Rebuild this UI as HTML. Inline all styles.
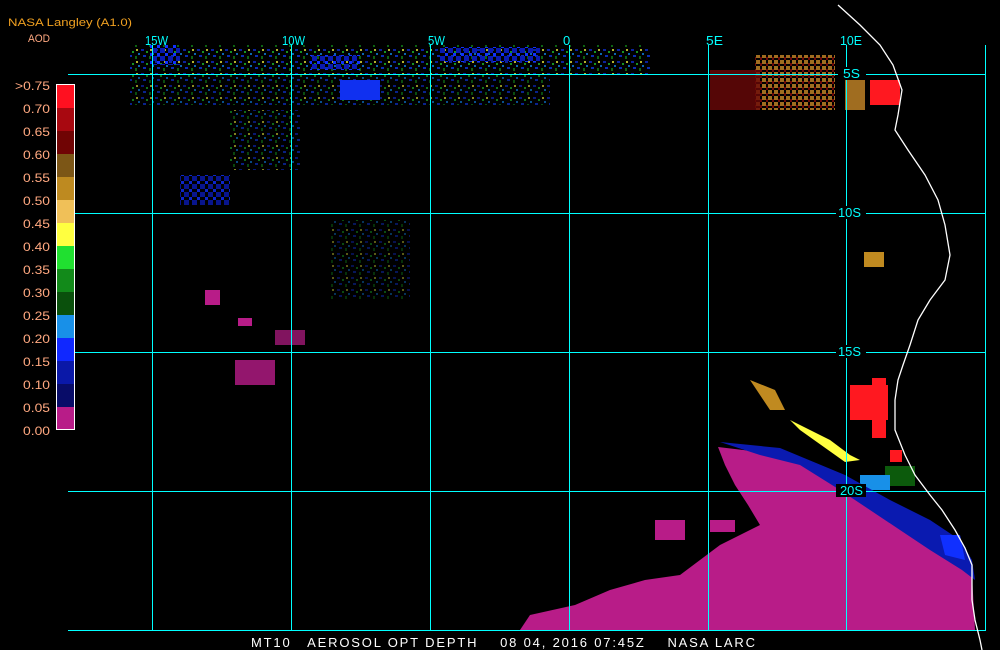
<!DOCTYPE html>
<html><head><style>
html,body{margin:0;padding:0;background:#000;width:1000px;height:650px;overflow:hidden}
svg{display:block}
</style></head><body>
<svg width="1000" height="650" viewBox="0 0 1000 650" xmlns="http://www.w3.org/2000/svg" font-family="Liberation Sans, sans-serif">
<defs>
<pattern id="spk" width="14" height="12" patternUnits="userSpaceOnUse">
<rect x="1" y="1" width="3" height="2" fill="#1030e0"/><rect x="6" y="3" width="2" height="2" fill="#20d030"/>
<rect x="10" y="1" width="2" height="2" fill="#ffff40"/><rect x="3" y="7" width="3" height="2" fill="#1040ff"/>
<rect x="9" y="8" width="2" height="3" fill="#128a1a"/><rect x="12" y="5" width="2" height="2" fill="#1090ff"/>
</pattern>
<pattern id="blu" width="8" height="8" patternUnits="userSpaceOnUse">
<rect width="5" height="5" fill="#0a1ab0"/><rect x="5" y="5" width="3" height="3" fill="#1030ff"/>
</pattern>
<pattern id="brn" width="6" height="6" patternUnits="userSpaceOnUse">
<rect width="4" height="4" fill="#a06d20"/><rect x="4" y="3" width="2" height="3" fill="#6a0808"/>
</pattern>
</defs>
<text x="8" y="26" fill="#f0a020" font-size="11" textLength="124" lengthAdjust="spacingAndGlyphs">NASA Langley (A1.0)</text>
<text x="28" y="42" fill="#ffa880" font-size="11" textLength="22" lengthAdjust="spacingAndGlyphs">AOD</text>

<!-- data -->
<rect x="130" y="45" width="520" height="30" fill="url(#spk)" opacity=".7"/>
<rect x="130" y="75" width="420" height="30" fill="url(#spk)" opacity=".55"/>
<rect x="150" y="45" width="30" height="20" fill="url(#blu)"/>
<rect x="340" y="80" width="40" height="20" fill="#1030f0"/>
<rect x="310" y="55" width="50" height="15" fill="url(#blu)"/>
<rect x="440" y="47" width="100" height="15" fill="url(#blu)"/>
<rect x="230" y="110" width="70" height="60" fill="url(#spk)" opacity=".5"/>
<rect x="180" y="175" width="50" height="30" fill="url(#blu)" opacity=".8"/>
<rect x="330" y="220" width="80" height="80" fill="url(#spk)" opacity=".35"/>
<rect x="205" y="290" width="15" height="15" fill="#b81c88"/>
<rect x="238" y="318" width="14" height="8" fill="#b81c88"/>
<rect x="235" y="360" width="40" height="25" fill="#b81c88" opacity=".8"/>
<rect x="275" y="330" width="30" height="15" fill="#b81c88" opacity=".7"/>
<rect x="755" y="55" width="80" height="55" fill="url(#brn)"/>
<rect x="710" y="70" width="50" height="40" fill="#6a0808" opacity=".8"/>
<rect x="870" y="80" width="30" height="25" fill="#ff1820"/>
<rect x="845" y="80" width="20" height="30" fill="#a06d20"/>
<rect x="864" y="252" width="20" height="15" fill="#c08a20"/>
<rect x="850" y="385" width="38" height="35" fill="#ff1820"/>
<rect x="872" y="378" width="14" height="60" fill="#ff1820"/>
<rect x="890" y="450" width="12" height="12" fill="#ff1820"/>
<rect x="885" y="466" width="30" height="20" fill="#0c5a0c"/>
<rect x="860" y="475" width="30" height="15" fill="#1890e8"/>
<polygon points="750,380 775,390 785,410 770,410" fill="#c08a20"/>
<polygon points="790,420 830,440 850,455 860,460 845,462 800,430" fill="#ffff40"/>
<polygon points="718,447 760,452 800,462 840,478 880,498 910,515 940,535 965,555 972,575 975,630 520,630 530,615 575,605 610,590 645,580 680,575 700,560 720,545 740,535 760,525 748,505 735,485 725,465" fill="#b81c88"/>
<polygon points="720,442 780,448 845,475 890,500 930,520 960,540 972,560 975,580 962,570 930,550 900,530 870,510 840,490 800,465 760,455" fill="#0a1ab0"/>
<polygon points="940,535 960,535 965,560 945,555" fill="#1030ff"/>
<rect x="655" y="520" width="30" height="20" fill="#b81c88"/>
<rect x="710" y="520" width="25" height="12" fill="#b81c88"/>

<!-- grid -->
<g stroke="#00ffff" stroke-width="1" fill="none">
<line x1="68" y1="74.5" x2="985" y2="74.5"/><line x1="68" y1="213.5" x2="985" y2="213.5"/>
<line x1="68" y1="352.5" x2="985" y2="352.5"/><line x1="68" y1="491.5" x2="985" y2="491.5"/>
<line x1="68" y1="630.5" x2="985" y2="630.5"/>
<line x1="152.5" y1="45" x2="152.5" y2="630"/><line x1="291.5" y1="45" x2="291.5" y2="630"/>
<line x1="430.5" y1="45" x2="430.5" y2="630"/><line x1="569.5" y1="45" x2="569.5" y2="630"/>
<line x1="708.5" y1="45" x2="708.5" y2="630"/><line x1="846.5" y1="45" x2="846.5" y2="630"/>
<line x1="985.5" y1="45" x2="985.5" y2="631"/>
</g>
<polyline fill="none" stroke="#fff" stroke-width="1.3" points="838,5 860,25 880,45 893,65 902,90 898,115 895,130 908,150 925,175 938,200 945,225 950,255 945,280 930,300 918,320 910,345 903,365 898,380 895,400 895,430 905,455 915,475 930,495 942,510 955,530 965,548 972,565 972,600 975,620 980,640 982,650"/>
<g fill="#00ffff" font-size="13">
<text x="145" y="45" textLength="23" lengthAdjust="spacingAndGlyphs">15W</text>
<text x="282" y="45" textLength="23" lengthAdjust="spacingAndGlyphs">10W</text>
<text x="428" y="45" textLength="17" lengthAdjust="spacingAndGlyphs">5W</text>
<text x="563" y="45">0</text>
<text x="706" y="45" textLength="17" lengthAdjust="spacingAndGlyphs">5E</text>
<text x="840" y="45" textLength="22" lengthAdjust="spacingAndGlyphs">10E</text>
</g>
<g font-size="13" fill="#00ffff">
<rect x="838" y="67" width="28" height="13" fill="#000"/><text x="843" y="78" textLength="17" lengthAdjust="spacingAndGlyphs">5S</text>
<rect x="836" y="206" width="30" height="13" fill="#000"/><text x="838" y="217" textLength="23" lengthAdjust="spacingAndGlyphs">10S</text>
<rect x="836" y="345" width="30" height="13" fill="#000"/><text x="838" y="356" textLength="23" lengthAdjust="spacingAndGlyphs">15S</text>
<rect x="836" y="484" width="30" height="13" fill="#000"/><text x="840" y="495" textLength="23" lengthAdjust="spacingAndGlyphs">20S</text>
</g>

<!-- legend -->
<g>
<rect x="56.5" y="84.5" width="18" height="345" fill="none" stroke="#fff"/>
<rect x="57" y="85" width="17" height="23" fill="#ff1020"/>
<rect x="57" y="108" width="17" height="23" fill="#a80810"/>
<rect x="57" y="131" width="17" height="23" fill="#700404"/>
<rect x="57" y="154" width="17" height="23" fill="#7c5616"/>
<rect x="57" y="177" width="17" height="23" fill="#be8a20"/>
<rect x="57" y="200" width="17" height="23" fill="#f0c058"/>
<rect x="57" y="223" width="17" height="23" fill="#ffff40"/>
<rect x="57" y="246" width="17" height="23" fill="#20e030"/>
<rect x="57" y="269" width="17" height="23" fill="#128a1a"/>
<rect x="57" y="292" width="17" height="23" fill="#0a500c"/>
<rect x="57" y="315" width="17" height="23" fill="#1890e8"/>
<rect x="57" y="338" width="17" height="23" fill="#1028ff"/>
<rect x="57" y="361" width="17" height="23" fill="#0a18a8"/>
<rect x="57" y="384" width="17" height="23" fill="#080c68"/>
<rect x="57" y="407" width="17" height="22" fill="#b81c88"/>
</g>
<g fill="#ffa880" font-size="12">
<text x="15" y="90" textLength="35" lengthAdjust="spacingAndGlyphs">&gt;0.75</text>
<text x="23" y="113" textLength="27" lengthAdjust="spacingAndGlyphs">0.70</text>
<text x="23" y="136" textLength="27" lengthAdjust="spacingAndGlyphs">0.65</text>
<text x="23" y="159" textLength="27" lengthAdjust="spacingAndGlyphs">0.60</text>
<text x="23" y="182" textLength="27" lengthAdjust="spacingAndGlyphs">0.55</text>
<text x="23" y="205" textLength="27" lengthAdjust="spacingAndGlyphs">0.50</text>
<text x="23" y="228" textLength="27" lengthAdjust="spacingAndGlyphs">0.45</text>
<text x="23" y="251" textLength="27" lengthAdjust="spacingAndGlyphs">0.40</text>
<text x="23" y="274" textLength="27" lengthAdjust="spacingAndGlyphs">0.35</text>
<text x="23" y="297" textLength="27" lengthAdjust="spacingAndGlyphs">0.30</text>
<text x="23" y="320" textLength="27" lengthAdjust="spacingAndGlyphs">0.25</text>
<text x="23" y="343" textLength="27" lengthAdjust="spacingAndGlyphs">0.20</text>
<text x="23" y="366" textLength="27" lengthAdjust="spacingAndGlyphs">0.15</text>
<text x="23" y="389" textLength="27" lengthAdjust="spacingAndGlyphs">0.10</text>
<text x="23" y="412" textLength="27" lengthAdjust="spacingAndGlyphs">0.05</text>
<text x="23" y="435" textLength="27" lengthAdjust="spacingAndGlyphs">0.00</text>
</g>
<text x="251" y="647" fill="#fff" font-size="13" xml:space="preserve" textLength="504" lengthAdjust="spacing">MT10   AEROSOL OPT DEPTH    08 04, 2016 07:45Z    NASA LARC</text>
</svg>
</body></html>
